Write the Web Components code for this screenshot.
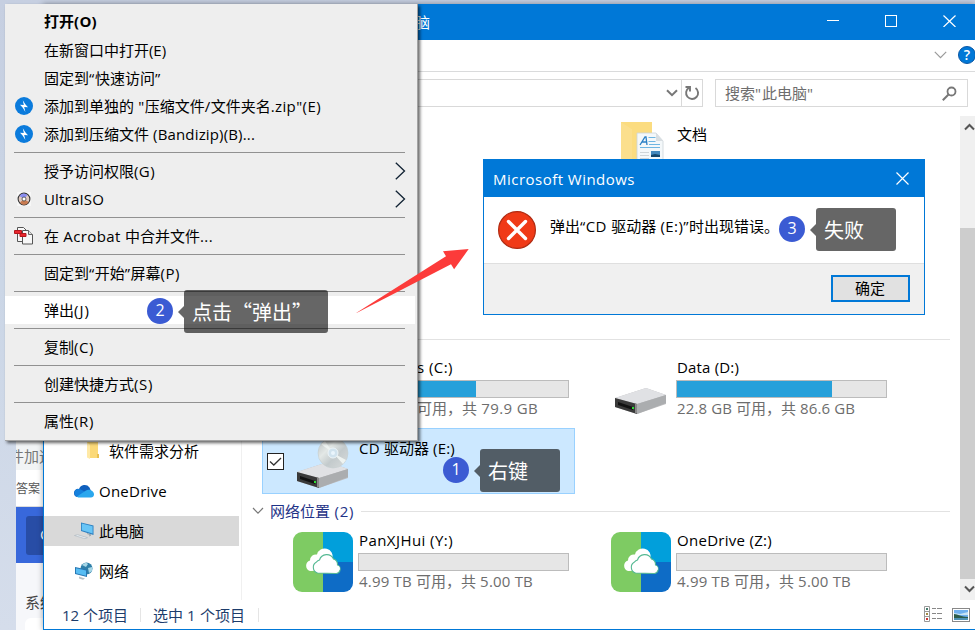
<!DOCTYPE html>
<html lang="zh-CN"><head><meta charset="utf-8"><title>此电脑</title>
<style>
html,body{margin:0;width:975px;height:630px;overflow:hidden}
body{font-family:"Open Sans","Noto Sans CJK SC",sans-serif;font-size:15px;color:#000}
</style></head><body>
<desk-top></desk-top>
<script>
const define=(name,css,html,init)=>{
  const t=document.createElement('template');
  customElements.define(name,class extends HTMLElement{
    connectedCallback(){
      if(this.shadowRoot)return;
      const body=typeof html==='function'?html(k=>this.getAttribute(k)||''):html;
      t.innerHTML='<style>*{box-sizing:border-box}'+css+'</style>'+body;
      this.attachShadow({mode:'open'}).append(t.content.cloneNode(true));
      if(init)init(this,this.shadowRoot);
    }
  });
};

/* One line of text; Latin runs are spaced so that the line has the width w. */
define('fit-text',`:host{display:block;white-space:pre;line-height:20px;flex:none}
 i{font-style:normal;font-size:1em}`,'<span></span>',(el,root)=>{
  const line=root.querySelector('span'),w=+el.getAttribute('w');
  let latin=0;
  for(const run of el.getAttribute('text').match(/[\u2e80-\uffef]+|[^\u2e80-\uffef]+/g)){
    if(/[\u2e80-\uffef]/.test(run))line.append(run);
    else{const i=document.createElement('i');i.textContent=run;line.append(i);latin+=run.length}
  }
  if(w&&latin){
    const gap=(w-line.getBoundingClientRect().width)/latin;
    root.querySelectorAll('i').forEach(i=>i.style.letterSpacing=gap+'px');
  }
});

const icons={
 zip:`<svg width="18" height="18"><circle cx="9" cy="9" r="9" fill="#0b7bdc"/><path d="M7.800 3.200 10.300 7.200 13 10.300 9.200 10 10.400 15 7.800 10.800 5 7.800 8.800 8z" fill="#fff"/></svg>`,
 iso:`<svg width="14" height="14"><rect width="14" height="14" fill="#f7f7f7"/><circle cx="7" cy="7" r="5.900" fill="#dfc9c0" stroke="#333" stroke-width="1.100"/><path d="M7 7 2.500 4A5 5 0 0 1 10.500 3z" fill="#8a8df0"/><path d="M7 7l4.600 3A5 5 0 0 1 3 10.500z" fill="#c87a50"/><circle cx="7" cy="7" r="2" fill="#fff" stroke="#444" stroke-width=".8"/></svg>`,
 pdf:`<svg width="20" height="20"><path d="M3.500 1.500h6l3 3v11h-9z" fill="#f7f7f7" stroke="#555"/><path d="M8.500 4.500h6l4 4v9.500h-10z" fill="#f7f7f7" stroke="#555"/><path d="M14.500 4.500v4h4" fill="#ddd" stroke="#666"/><path d="M.5 4.500h7v3h-7zM6 7.500h6v3H6z" fill="#e8262d" stroke="#b3161c"/></svg>`,
 none:'',
 folder:`<svg width="16" height="18"><path d="M2 0h11v13l1 1v2H4z" fill="#fbd978"/><path d="M2 0l3 3v14l-3-1.500z" fill="#ffe9a6"/><path d="M12 12h2v4h-2z" fill="#e8bf50"/></svg>`,
 cloud:`<svg width="20" height="14"><path d="M5 5a6 6 0 0 1 10.500-1.500L17 7l-8 6H4A4 4 0 0 1 0 9a4 4 0 0 1 5-4" fill="#0f5fbd"/><path d="M3 5.200c3-1 5 1 8 2.500l-7 5.200A4 4 0 0 1 3 5.200" fill="#1480dd"/><path d="M3 12.500l9-6c3-2 8 .5 8 4 0 2-1.500 3-3 3H4z" fill="#2aa7ee"/></svg>`,
 pc:`<svg width="20" height="18"><path d="M7 .5l12.500 3v9.500L7 9z" fill="#2b7fc0"/><path d="M7.800 1.600l10.800 2.600v7.300L7.800 8.300z" fill="#68c5f6"/><path d="M.5 13.500l3-.8 10 3-2.500 1z" fill="#e8eef2" stroke="#a9b4bc" stroke-width=".6"/><path d="M13 11.500l4 1.500-2 1" fill="none" stroke="#8698a5" stroke-width=".8"/></svg>`,
 net:`<svg width="20" height="18"><circle cx="12.500" cy="6.500" r="6" fill="#2f7fa9"/><path d="M8 3c3-3 5-2 6-1l-2 3zM14 6l4-1c1 4-1 5-3 6z" fill="#a6d6e6"/><path d="M1 5l12 2.500v7.500L1 12z" fill="#2878b4"/><path d="M2 6.200l10 2.200v5.300L2 11.200z" fill="#58bdf3"/><path d="M5 14.500l6 2-2 1.200-4-1.200z" fill="#b9c0c4"/></svg>`
};

define('menu-item',`:host{display:flex;align-items:center;height:28px;width:410px;flex:none}
 :host([hot]){background:#fff}
 .i{width:39px;height:28px;display:flex;align-items:center;justify-content:center;flex:none;padding-right:2px}
 :host([bold]){font-weight:700}:host([bold]) fit-text{margin-top:-2px}
 .a{margin-left:auto;margin-right:9px;display:none}:host([sub]) .a{display:block}svg{display:block}`,
 a=>`<div class="i">${icons[a('icon')||'none']}</div><fit-text text="${a('text').replace(/"/g,'&quot;')}" w="${a('w')}"></fit-text>
 <svg class="a" width="11" height="18"><path d="M.8.8 9.500 9 .8 17.200" fill="none" stroke="#123" stroke-width="1.300"/></svg>`);
define('menu-line',`:host{display:block;height:9px;padding:4px 12px 0 9px;flex:none}div{height:1px;background:#919191}`,'<div></div>');
define('context-menu',`:host{display:flex;flex-direction:column;padding-top:4px;width:413px;height:437px;background:#eee;border-right:1px solid #a3a3a3;border-bottom:1px solid #a3a3a3;box-sizing:border-box;box-shadow:2px 2px 3px rgba(0,0,0,.6)}`,'<slot></slot>');

define('side-item',`:host{display:flex;align-items:center;height:30px;margin:0 2px 10px 0;padding-left:30px;gap:5px;flex:none}
 :host([on]){background:#d9d9d9}:host([deep]){padding-left:41px;gap:8px}svg{display:block}`,
 a=>`${icons[a('icon')]}<fit-text text="${a('text')}" w="${a('w')}"></fit-text>`);

define('usage-bar',`:host{display:block;width:211px;height:18px;border:1px solid #bcbcbc;background:#e6e6e6;box-sizing:border-box}div{height:100%;background:#26a0da}`,
 a=>`<div style="width:${a('fill')}px"></div>`);

const box='<path d="M0 14 31 4l20 7v9L22 30 0 23z" fill="#bcbcbe"/><path d="M0 14 31 4l20 7-29 9z" fill="#e0e1e4"/><path d="M0 14l22 6v10L0 23z" fill="#3a3a3a"/><path d="M3 18l15 5v3L3 21z" fill="#111"/><path d="M22 20l29-9v8L22 30z" fill="#abadaf"/><path d="M20 19.500l2 .5v9.500l-2-.5z" fill="#888"/><rect x="17" y="23" width="2" height="2" fill="#2ddc35"/>';
const art={
 none:'',
 disk:`<svg width="60" height="60"><g transform="translate(4 26)">${box}</g></svg>`,
 cd:`<svg width="60" height="60"><defs><linearGradient id="d" x2="1" y2="1"><stop offset="0" stop-color="#b9bfc1"/><stop offset=".35" stop-color="#e3e8e6"/><stop offset=".6" stop-color="#c3cacc"/><stop offset="1" stop-color="#d9dcdc"/></linearGradient></defs><g transform="translate(4 18)">${box}</g><circle cx="40" cy="13" r="15" fill="url(#d)" stroke="#c3cccf" stroke-width=".6"/><path d="M40 13 28 4l4-3zM40 13l13 7-3 4z" fill="#eef3f1"/><circle cx="40" cy="13" r="5" fill="#d1e3ee" stroke="#eef5f8"/><circle cx="40" cy="13" r="2" fill="#eaf5fc"/></svg>`,
 drive:`<svg width="60" height="60"><defs><clipPath id="r"><rect width="60" height="60" rx="9"/></clipPath></defs><g clip-path="url(#r)"><path fill="#7ecb63" d="M0 0h30v60H0z"/><path fill="#019fdb" d="M30 0h30v30H30z"/><path fill="#0e6cc6" d="M30 30h30v30H30z"/></g><path d="M17 39a5.500 5.500 0 0 1 0-10.500 6 6 0 0 1 7-6 8 8 0 0 1 15.500 4v12z" fill="#fff"/><path d="M24.500 41a6 6 0 0 1-1-11 5.500 5.500 0 0 1 3-2 7.500 7.500 0 0 1 14-1 6 6 0 0 1 4 6 4.500 4.500 0 0 1-1 8.500z" fill="#fff" stroke="#56b993" stroke-width="1.100"/><path d="M24 39.500h20a3 3 0 0 0 1-5.800l-3 .3-17-1.500z" fill="#fff"/></svg>`,
 docs:`<svg width="60" height="60"><path d="M10 0h31v38H26L10 42z" fill="#fbdc80"/><path d="M10 0l11 8v52l-11-7z" fill="#f5d06c"/><path d="M10 0l11 7.500V45l-11 0z" fill="#ffe9a3" opacity=".6"/><path d="M26 11h19l7 8v35H26z" fill="#f4f8fa" stroke="#cbd3d8" stroke-width=".8"/><path d="M45 11v8h7z" fill="#d8dee2"/><path d="M29 23l5-8h1l1 8M31 20h5" stroke="#2a7fc5" stroke-width="1.300" fill="none"/><path d="M37.500 15.500h7M37.500 19.500h7M38 22.500h11M29 25.500h20" stroke="#6fb6e2" stroke-width="1"/><path d="M29 30.500h9M29 33.500h9M29 36.500h9" stroke="#cfd5d8" stroke-width="1"/><rect x="40" y="29" width="9" height="6" fill="#4489bd"/><path d="M40 33l4-1 5 1v2h-9z" fill="#16476b"/></svg>`
};
define('drive-tile',`:host{display:flex;width:313px;height:66px;box-sizing:border-box;border:1px solid transparent;align-items:flex-start;flex:none}
 :host([sel]){background:#cce8ff;border-color:#99d1ff}
 .c{width:30px;height:64px;display:flex;align-items:center;padding-left:4px;flex:none}
 .c svg{display:none}:host([sel]) .c svg{display:block}
 .art{width:60px;height:60px;margin-top:10px;flex:none}:host([sel]) .art,:host([net]) .art{margin-top:11px}:host([doc]) .art{margin-top:8px}svg{display:block;overflow:visible}
 .t{display:flex;flex-direction:column;padding:9px 0 0 6px}:host([doc]) .t{padding-top:10px}
 usage-bar{margin:3px 0 0 -1px}.f{color:#6d6d6d}`,
 a=>`<div class="c"><svg width="17" height="17"><rect x=".5" y=".5" width="16" height="16" fill="#fff" stroke="#222"/><path d="M3 8.500l3.800 3.500L14 5" fill="none" stroke="#333" stroke-width="1.300"/></svg></div>
 <div class="art">${art[a('icon')||'none']}</div>
 <div class="t"><div style="padding-left:${a('x')||0}px"><fit-text text="${a('text')}" w="${a('w')}"></fit-text></div>
 ${a('free')?`<usage-bar fill="${a('fill')}"></usage-bar><div style="padding-left:${a('x')||0}px"><fit-text class="f" text="${a('free')}" w="${a('fw')}"></fit-text></div>`:''}</div>`);

define('group-head',`:host{display:flex;align-items:center;height:20px;color:#1e3287;gap:6px;flex:none}.l{flex:1;height:1px;background:#e2e2e2;margin-left:1px}svg{display:block}`,
 a=>`<svg width="12" height="8"><path d="M1 1l5 5.200L11 1" fill="none" stroke="#777" stroke-width="1.200"/></svg><fit-text text="${a('text')}" w="${a('w')}"></fit-text><div class="l"></div>`);

define('title-bar',`:host{display:flex;height:36px;background:#0078d7;color:#fff;align-items:center;flex:none}
 .n{margin-left:371px;font-size:15px}.b{margin-left:auto;display:flex;align-items:center;gap:46px;padding:0 19px 2px 0}svg{display:block}`,
 `<fit-text class="n" text="脑"></fit-text><div class="b"><svg width="12" height="12"><path d="M0 5.500h12" stroke="#fff"/></svg><svg width="12" height="12"><rect x=".5" y=".5" width="11" height="11" fill="none" stroke="#fff"/></svg><svg width="13" height="12"><path d="M.5.500l12 11.500M12.500.500.500 12" stroke="#fff" stroke-width="1.200"/></svg></div>`);

define('tool-rows',`:host{display:block;flex:none;height:76px}svg{display:block}
 .r{height:32px;border-bottom:1px solid #dadbdc;display:flex;align-items:center;justify-content:flex-end;gap:11px;padding-bottom:1px}
 .r svg{flex:none}
 .a{display:flex;padding:7px 7px 0 20px;gap:12px}
 .p{flex:1;height:28px;border:1px solid #d9d9d9;display:flex;justify-content:flex-end;align-items:center}
 .d{padding-right:0}.re{border-left:1px solid #d9d9d9;height:26px;width:21px;display:flex;align-items:center;justify-content:center}
 .s{width:253px;height:28px;border:1px solid #d9d9d9;display:flex;align-items:center;justify-content:space-between;padding:0 10px 0 9px;color:#6d6d6d}
 .h{width:18px;height:18px;box-sizing:border-box;border:1px solid #0a57a5;border-radius:50%;background:#0078d7;color:#fff;font-size:14px;line-height:16px;text-align:center;font-weight:600;flex:none;margin-right:-1px}`,
 `<div class="r"><svg width="13" height="8"><path d="M.8.8l5.700 5.800L12.200.8" fill="none" stroke="#999" stroke-width="1.200"/></svg><div class="h">?</div></div>
 <div class="a"><div class="p"><svg class="d" width="15" height="8"><path d="M1 1.200l5 5 5-5" fill="none" stroke="#777" stroke-width="2"/></svg><div class="re"><svg width="16" height="16"><path d="M5 2.800A6 6 0 1 0 11.500 3M6 6.500V2H1.500" fill="none" stroke="#777" stroke-width="1.900"/></svg></div></div>
 <div class="s"><fit-text text="搜索&quot;此电脑&quot;" w="89"></fit-text><svg width="15" height="15"><circle cx="9.500" cy="5.500" r="4" fill="none" stroke="#777" stroke-width="1.800"/><path d="M6.500 8.500.800 14.200" stroke="#777" stroke-width="2"/></svg></div></div>`);

define('scroll-bar',`:host{display:flex;flex-direction:column;width:15px;background:#f0f0f0;flex:none}svg{display:block}
 .u{height:112px;padding:7px 0 0 4px}.m{height:351px;background:#cdcdcd}.d{padding:6px 0 0 4px}`,
 `<div class="u"><svg width="11" height="8"><path d="M1 6.500l4.500-4.500L10 6.500" fill="none" stroke="#555" stroke-width="2"/></svg></div><div class="m"></div><div class="d"><svg width="11" height="9"><path d="M1 1.500l4.500 4.500L10 1.500" fill="none" stroke="#555" stroke-width="2"/></svg></div>`);

define('status-bar',`:host{display:flex;align-items:center;height:29px;padding:0 5px 0 18px;color:#1c3c6b;flex:none;box-sizing:border-box}
 .l{width:1px;height:14px;background:#e5e5e5}.v{margin-left:auto;display:flex;gap:10px;align-items:center}svg{display:block}`,
 `<fit-text text="12 个项目" w="66"></fit-text><div class="l" style="margin:0 12px 0 12px"></div><fit-text text="选中 1 个项目" w="92"></fit-text><div class="l" style="margin-left:13px"></div>
 <div class="v"><svg width="18" height="17"><path d="M.500.500h5v15h-5zM.500 5.500h5M.500 10.500h5" fill="#fff" stroke="#999"/><path d="M8 2.500h4m1 0h5M8 7.500h4m1 0h5M8 12.500h4m1 0h5" stroke="#888"/><path d="M2 2h2v2H2z" fill="#467d6d"/><path d="M2 7h2v2H2z" fill="#a48a45"/><path d="M2 12h2v2H2z" fill="#c33"/></svg>
 <svg width="18" height="14"><rect x=".500" y=".500" width="17" height="13" fill="#fff" stroke="#888"/><path d="M2 2h14v10H2z" fill="#6fb0ef"/><path d="M2 5l6 1 8-2v3H2z" fill="#c7e3f4"/><path d="M2 6c4 0 7 3 14 3v1H2z" fill="#2c5c4b"/><path d="M2 10h14v2H2z" fill="#4e91b4"/></svg></div>`);

define('file-explorer',`:host{display:flex;flex-direction:column;width:932px;height:626px;background:#fff;border-left:1px solid #0078d7;border-bottom:1px solid #0078d7;box-sizing:border-box}
 .m{display:flex;flex:1;min-height:0}
 .n{width:198px;border-right:1px solid #f0f0f0;display:flex;flex-direction:column;justify-content:flex-end;padding-bottom:4px;overflow:hidden}
 .c{flex:1;overflow:hidden;display:flex;flex-direction:column;padding-left:10px}
 .row{display:grid;grid-template-columns:313px 313px;column-gap:5px;margin-left:10px;flex:none}
 .x{padding-right:10px}.first{height:1px;background:#e2e2e2;margin:160px 10px 7px 0;flex:none}`,
 `<title-bar></title-bar><tool-rows></tool-rows>
 <div class="m"><div class="n"><side-item deep icon="folder" text="软件需求分析"></side-item><side-item icon="cloud" text="OneDrive" w="68"></side-item><side-item on icon="pc" text="此电脑"></side-item><side-item icon="net" text="网络"></side-item></div>
 <div class="c"><div class="row" style="margin-top:-3px"><span></span><drive-tile doc icon="docs" text="文档"></drive-tile></div>
 <div class="first"></div>
 <div class="row"><drive-tile x="58" text="s (C:)" w="36" fill="117" free="可用，共 79.9 GB" fw="121"></drive-tile><drive-tile icon="disk" text="Data (D:)" w="62" fill="155" free="22.8 GB 可用，共 86.6 GB" fw="178"></drive-tile></div>
 <div class="row" style="margin-top:15px"><drive-tile sel icon="cd" text="CD 驱动器 (E:)" w="96"></drive-tile></div>
 <div class="x" style="margin-top:7px"><group-head text="网络位置 (2)" w="84"></group-head></div>
 <div class="row" style="margin-top:-1px"><drive-tile net icon="drive" text="PanXJHui (Y:)" w="94" fill="0" free="4.99 TB 可用，共 5.00 TB" fw="174"></drive-tile><drive-tile net icon="drive" text="OneDrive (Z:)" w="95" fill="0" free="4.99 TB 可用，共 5.00 TB" fw="174"></drive-tile></div>
 </div><scroll-bar></scroll-bar></div>
 <status-bar></status-bar>`);

define('error-dialog',`:host{display:flex;flex-direction:column;width:442px;height:156px;border:1px solid #0078d7;background:#fff;box-sizing:border-box}
 .t{height:37px;background:#0078d7;color:#fff;display:flex;align-items:center;justify-content:space-between;padding:0 15px 0 9px;flex:none}
 .m{height:67px;display:flex;border-bottom:1px solid #dfdfdf;padding:14px 0 0 14px;gap:14px;flex:none}
 .m fit-text{margin-top:5px}.f{flex:1;background:#f0f0f0;display:flex;justify-content:flex-end;padding:11px 14px 0 0}
 button{width:79px;height:27px;border:2px solid #0078d7;background:#e1e1e1;font:inherit;padding:0 1px 2px 0;display:flex;align-items:center;justify-content:center}svg{display:block}`,
 `<div class="t"><fit-text text="Microsoft Windows" w="142"></fit-text><svg width="13" height="13"><path d="M.500.500l12 12M12.500.500l-12 12" stroke="#fff" stroke-width="1.200"/></svg></div>
 <div class="m"><svg width="38" height="38"><circle cx="19" cy="19" r="18.400" fill="#f03a17" stroke="#b02b12" stroke-width="1.200"/><path d="M10.500 10.500l17 17M27.500 10.500l-17 17" stroke="#fff" stroke-width="3.400" stroke-linecap="round"/></svg><fit-text text="弹出“CD 驱动器 (E:)”时出现错误。" w="229"></fit-text></div>
 <div class="f"><button><fit-text text="确定"></fit-text></button></div>`);

/* Numbered badge with a speech label beside it. */
define('step-note',`:host{display:flex;align-items:center;color:#fff}
 .n{width:26px;height:26px;border-radius:50%;background:#3b5bd3;text-align:center;font-size:16px;line-height:25px;margin:0 5px 1px 0;flex:none}
 .a{border:6px solid transparent;border-left:0;border-right-color:rgba(0,0,0,.6);flex:none}
 .l{height:43px;border-radius:3px;background:rgba(0,0,0,.6);font:20px/44px "Noto Sans CJK SC",sans-serif;padding-left:8px;white-space:pre;box-sizing:border-box}`,
 a=>`<div class="n">${a('n')}</div><div class="a"></div><div class="l" style="width:${a('w')}px">${a('text')}</div>`);

define('back-page',`:host{display:flex;flex-direction:column;width:27px;height:189px;overflow:hidden;background:#fff;color:#777;white-space:nowrap}
 div{flex:none;overflow:hidden}.a{height:29px;background:#f2f4f5;line-height:30px;text-indent:-7px}.b{height:37px;font-size:12px;line-height:38px;border-bottom:1px solid #ddd;color:#555}
 .c{height:56px;background:#3868db;padding:9px 0 0 10px}.d{height:39px;background:#284da6;border-radius:3px 0 0 3px;color:#fff;line-height:36px;padding-left:14px}
 .e{flex:1;background:#f6f7fa;padding:28px 0 0 9px;color:#444}.w{margin-top:6px;background:#fff;height:20px;border-radius:6px 0 0}`,
 `<div class="a">件加速</div><div class="b">答案</div><div class="c"><div class="d">C</div></div><div class="e">系统<div class="w"></div></div>`);

define('desk-top',`:host{display:block;position:relative;width:975px;height:630px;overflow:hidden;background:linear-gradient(#c6cfe1,#cbd6e6 45%,#d5ddeb)}
 .abs{position:absolute}`,
 `<back-page class="abs" style="left:16px;top:441px"></back-page>
 <file-explorer class="abs" style="left:43px;top:4px;box-shadow:0 0 6px rgba(0,0,0,.35)"></file-explorer>
 <error-dialog class="abs" style="left:483px;top:159px"></error-dialog>
 <context-menu class="abs" style="left:5px;top:4px">
 <menu-item bold text="打开(O)" w="53"></menu-item><menu-item text="在新窗口中打开(E)" w="122"></menu-item><menu-item text="固定到“快速访问”" w="117"></menu-item>
 <menu-item icon="zip" text="添加到单独的 &quot;压缩文件/文件夹名.zip&quot;(E)" w="277"></menu-item><menu-item icon="zip" text="添加到压缩文件 (Bandizip)(B)..." w="211"></menu-item><menu-line></menu-line>
 <menu-item sub text="授予访问权限(G)" w="111"></menu-item><menu-item sub icon="iso" text="UltraISO" w="60"></menu-item><menu-line></menu-line>
 <menu-item icon="pdf" text="在 Acrobat 中合并文件..." w="169"></menu-item><menu-line></menu-line>
 <menu-item text="固定到“开始”屏幕(P)" w="136"></menu-item><menu-line></menu-line>
 <menu-item hot text="弹出(J)" w="46"></menu-item><menu-line></menu-line>
 <menu-item text="复制(C)" w="50"></menu-item><menu-line></menu-line>
 <menu-item text="创建快捷方式(S)" w="109"></menu-item><menu-line></menu-line>
 <menu-item text="属性(R)" w="50"></menu-item></context-menu>
 <svg class="abs" style="left:350px;top:244px" width="124" height="74"><path d="M6.500 68.800 96 12.300 93 7.200l25.700-2.100-14.600 20.200-3.100-5L6.500 69z" fill="#fc3b3a"/></svg>
 <step-note class="abs" style="left:147px;top:290px" n="2" w="144" text="点击“弹出”"></step-note>
 <step-note class="abs" style="left:443px;top:449px" n="1" w="80" text="右键"></step-note>
 <step-note class="abs" style="left:779px;top:208px" n="3" w="80" text="失败"></step-note>`);
</script></body></html>
